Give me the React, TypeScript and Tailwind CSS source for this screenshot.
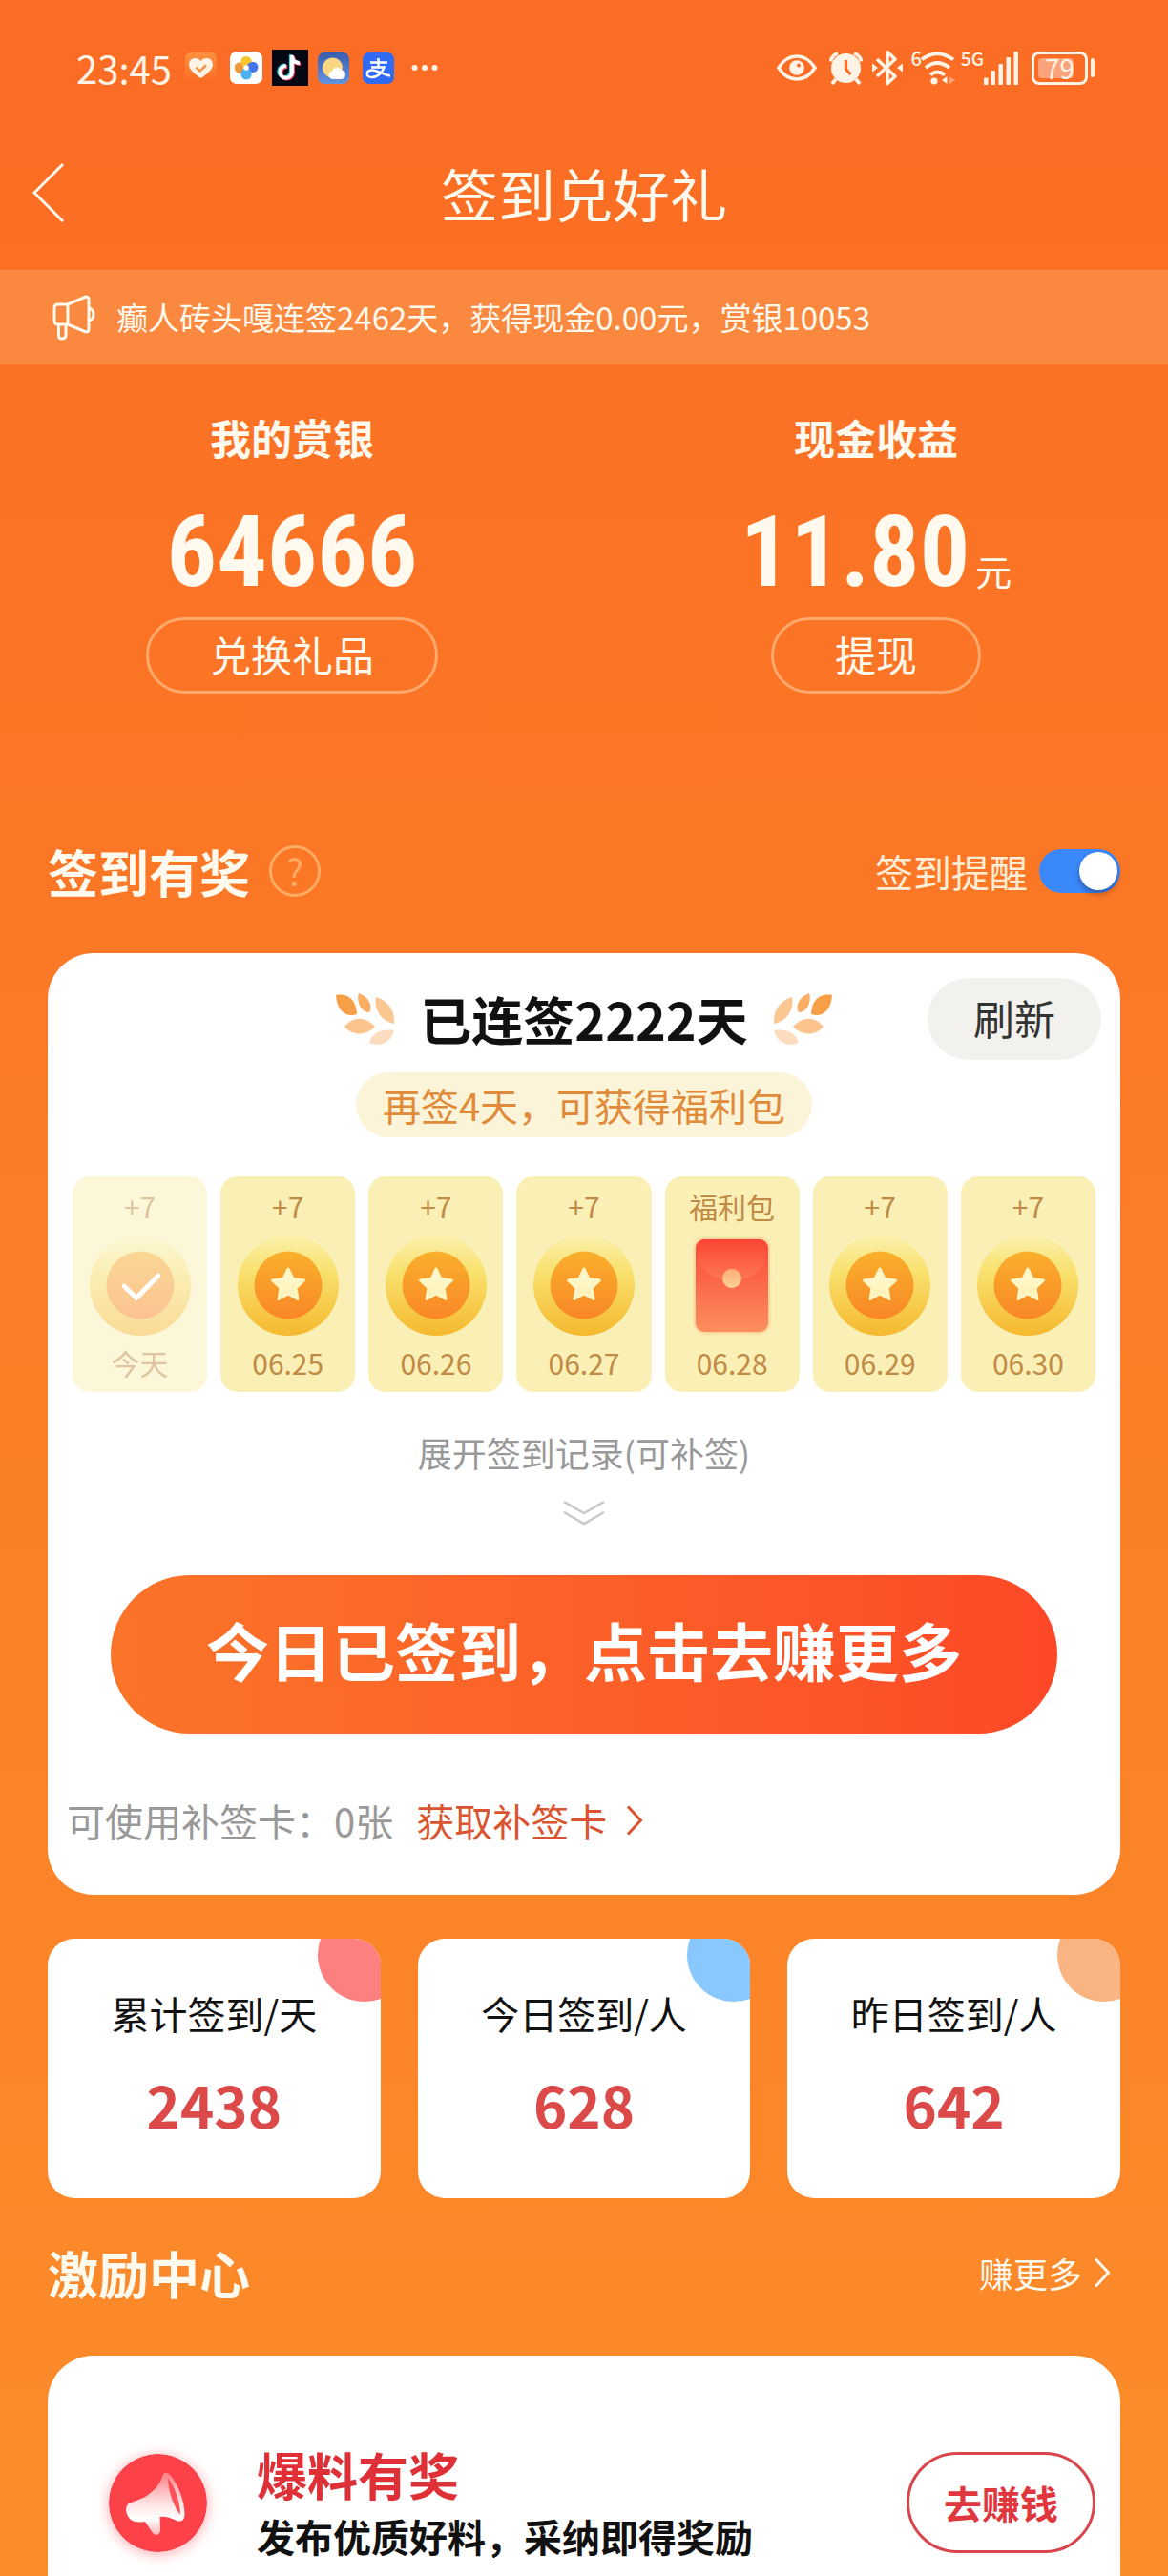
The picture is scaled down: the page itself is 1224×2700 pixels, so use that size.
import { useState } from "react";

type Day = { reward: string; date: string; kind: "done" | "coin" | "gift" };

const days: Day[] = [
  { reward: "+7", date: "今天", kind: "done" },
  { reward: "+7", date: "06.25", kind: "coin" },
  { reward: "+7", date: "06.26", kind: "coin" },
  { reward: "+7", date: "06.27", kind: "coin" },
  { reward: "福利包", date: "06.28", kind: "gift" },
  { reward: "+7", date: "06.29", kind: "coin" },
  { reward: "+7", date: "06.30", kind: "coin" },
];

const stats = [
  { label: "累计签到/天", value: "2438", dot: "bg-[#fd8080]" },
  { label: "今日签到/人", value: "628", dot: "bg-[#88c8ff]" },
  { label: "昨日签到/人", value: "642", dot: "bg-[#fab482]" },
];

function HeartApp() {
  return (
    <svg className="size-[33px]" viewBox="0 0 33 33" aria-hidden="true">
      <defs>
        <linearGradient id="heartBg" x1="0" y1="0" x2="0" y2="1">
          <stop offset="0" stopColor="#fd9140" />
          <stop offset="1" stopColor="#fb6a22" />
        </linearGradient>
      </defs>
      <rect width="33" height="33" rx="6" fill="url(#heartBg)" />
      <path d="M16.5 27C9 22 4 17.500 4 12.500 4 8.500 7 6 10.500 6c2.500 0 4.700 1.200 6 3.200C17.800 7.200 20 6 22.500 6 26 6 29 8.500 29 12.500 29 17.500 24 22 16.500 27Z" fill="#fff3e6" />
      <path d="m11.500 15.500 4 4 6.500-6" fill="none" stroke="#f0954a" strokeWidth="2.600" />
    </svg>
  );
}

function GalleryApp() {
  return (
    <svg className="size-[34px]" viewBox="0 0 34 34" aria-hidden="true">
      <rect width="34" height="34" rx="7" fill="#fff" />
      <path d="M17 17c-2 6-7 8-11 4C3 16 6 10.500 11 11.500c3 .5 5 2.500 6 5.500Z" fill="#f2993c" />
      <path d="M17 17C12 16 9.500 9.500 13.500 6c5-3 10.500 1 9 6.500-1 2.500-3 4-5.500 4.500Z" fill="#f7c52c" />
      <path d="M17 17c1-5 7-8 11-4.500 3.500 4.500 0 10-5 9.500-3-.5-5-2-6-5Z" fill="#4276e8" />
      <path d="M17 17c5 1 7.500 7 4 11-4.500 3.500-10.500 0-9.500-5.500.5-3 2.500-5 5.500-5.500Z" fill="#4db1f2" />
      <circle cx="17" cy="17" r="2.800" fill="#fff" />
    </svg>
  );
}

function NoteApp() {
  const note = "M21 6v17.500a6.300 6.300 0 1 1-6-6.300M21 7c.5 4.500 3.500 7 8 7.300";
  return (
    <svg className="size-[38px]" viewBox="0 0 38 38" aria-hidden="true">
      <rect width="38" height="38" fill="#060714" />
      <g fill="none" strokeWidth="3.800">
        <path d={note} stroke="#3fd6dc" transform="translate(-1.200 -.8)" />
        <path d={note} stroke="#f23d68" transform="translate(1.200 .8)" />
        <path d={note} stroke="#fff" />
      </g>
    </svg>
  );
}

function WeatherApp() {
  return (
    <svg className="size-[33px]" viewBox="0 0 33 33" aria-hidden="true">
      <defs>
        <linearGradient id="sky" x1="0" y1="0" x2="0" y2="1">
          <stop offset="0" stopColor="#3b5cae" />
          <stop offset="1" stopColor="#6394df" />
        </linearGradient>
      </defs>
      <rect width="33" height="33" rx="7" fill="url(#sky)" />
      <circle cx="15.500" cy="16" r="10.500" fill="#f9d681" />
      <path d="M15.500 28a4.200 4.200 0 0 1-.5-8.300 5.500 5.500 0 0 1 10-1.200 4.800 4.800 0 0 1-.5 9.500Z" fill="#fff" />
    </svg>
  );
}

function PayApp() {
  return (
    <svg className="size-[33px]" viewBox="0 0 33 33" aria-hidden="true">
      <rect width="33" height="33" rx="7" fill="#316bf3" />
      <g fill="none" stroke="#fff" strokeWidth="2.400">
        <path d="M8 10.500h18M16.500 6v9M9 15.500h13.500C20 22 15 26 9.500 26 3 26 3 18.500 10 18.500c6 0 11 5 19 6" />
      </g>
    </svg>
  );
}

function StatusBar() {
  return (
    <div className="flex items-center justify-between pt-[51px] pr-[77px] pb-[34px] pl-20 text-[#fff3e6]">
      <div className="flex h-10 items-center gap-3.5">
        <time className="text-[40px] leading-10">23:45</time>
        <HeartApp />
        <GalleryApp />
        <div className="-mx-1">
          <NoteApp />
        </div>
        <WeatherApp />
        <PayApp />
        <svg className="ml-1 h-2 w-7" viewBox="0 0 28 8" fill="currentColor" aria-hidden="true">
          <circle cx="3.500" cy="4" r="3" />
          <circle cx="14" cy="4" r="3" />
          <circle cx="24.500" cy="4" r="3" />
        </svg>
      </div>
      <div className="flex h-10 items-center">
        <svg className="h-[28px] w-[42px]" viewBox="0 0 42 28" aria-hidden="true">
          <path d="M2 14C7 6 14 2 21 2s14 4 19 12c-5 8-12 12-19 12S7 22 2 14Z" fill="none" stroke="currentColor" strokeWidth="3.600" />
          <circle cx="21" cy="14" r="7.800" fill="currentColor" />
          <circle cx="23" cy="11.500" r="2" fill="#fb6c24" />
        </svg>
        <svg className="ml-[13px] size-[35px]" viewBox="0 0 35 35" aria-hidden="true">
          <circle cx="17.500" cy="17.500" r="15.500" fill="currentColor" />
          <path d="M1.500 10.500A11 11 0 0 1 9 2M33.500 10.500A11 11 0 0 0 26 2M7 29l-4 5M28 29l4 5" stroke="currentColor" strokeWidth="3.800" fill="none" />
          <path d="M17.500 9v9.500l5 5.500" fill="none" stroke="#fb6c24" strokeWidth="3.200" />
        </svg>
        <svg className="ml-2.5 h-[38px] w-[32px]" viewBox="0 0 32 38" aria-hidden="true">
          <path d="m5 10 19 18-8 7.500v-33L24 10 5 28" fill="none" stroke="currentColor" strokeWidth="3.600" strokeLinejoin="round" />
          <path d="m0 14.500 6 4.500-6 4.500ZM32 14.500 26 19l6 4.500Z" fill="currentColor" />
        </svg>
        <span className="ml-2 self-start text-xl leading-5 font-medium">6</span>
        <svg className="-ml-px h-9 w-[38px]" viewBox="0 0 38 36" aria-hidden="true">
          <g fill="none" stroke="currentColor" strokeWidth="4">
            <path d="M1 9.500Q17 -3 34 9.500" />
            <path d="M5 18q12-10 25 0" />
            <path d="M10 25.500q7-6 15 0" />
          </g>
          <circle cx="14" cy="32" r="3.600" fill="currentColor" />
          <path d="M27.500 27v8l-5.500-4Z" fill="currentColor" />
          <path d="M30 27.500 36 31l-6 4.500Z" fill="#fda273" />
        </svg>
        <span className="ml-1 self-start text-[19px] leading-5 font-medium">5G</span>
        <svg className="h-[35px] w-9" viewBox="0 0 36 35" fill="currentColor" aria-hidden="true">
          <rect x="0" y="27.500" width="4.500" height="7.500" rx="1" />
          <rect x="7.500" y="20" width="4.500" height="15" rx="1" />
          <rect x="15.500" y="13" width="4.500" height="22" rx="1" />
          <rect x="23.500" y="6" width="4.500" height="29" rx="1" />
          <rect x="31.500" y="0" width="4.500" height="35" rx="1" />
        </svg>
        <div className="relative ml-3.5 flex h-[35px] w-[59px] items-center justify-center rounded-lg border-3 border-current">
          <span className="absolute inset-y-1 left-1 w-[37px] rounded-sm bg-[#fda37b]" />
          <span className="relative text-[28px] leading-7">79</span>
        </div>
        <span className="ml-[3px] h-5 w-1 rounded-sm bg-current" />
      </div>
    </div>
  );
}

function Chevron() {
  return (
    <svg className="h-8 w-[18px]" viewBox="0 0 18 32" fill="none" stroke="currentColor" strokeWidth="3" aria-hidden="true">
      <path d="m2 1.500 13.500 14.500L2 30.500" />
    </svg>
  );
}

function Coin({ kind }: { kind: "done" | "coin" }) {
  return (
    <svg className="size-[106px]" viewBox="0 0 106 106" aria-hidden="true">
      <defs>
        <linearGradient id="rim" x1="0" y1="0" x2="0" y2="1">
          <stop offset="0" stopColor="#faf0ae" />
          <stop offset=".35" stopColor="#f9e270" />
          <stop offset="1" stopColor="#f5b82e" />
        </linearGradient>
        <linearGradient id="face" x1="0" y1="0" x2="0" y2="1">
          <stop offset="0" stopColor="#f9b02c" />
          <stop offset="1" stopColor="#f98726" />
        </linearGradient>
        <linearGradient id="star" x1="0" y1="0" x2="0" y2="1">
          <stop offset="0" stopColor="#fffbd5" />
          <stop offset="1" stopColor="#fdf0b4" />
        </linearGradient>
      </defs>
      <circle cx="53" cy="53" r="53" fill="url(#rim)" />
      <circle cx="53" cy="53" r="35.500" fill="url(#face)" />
      {kind === "coin" ? (
        <path
          d="m53 36 5 10.500 11.500 1.500-8.500 8 2 11.500L53 62l-10 5.500 2-11.500-8.500-8L48 46.500Z"
          fill="url(#star)"
          stroke="#fdf5c3"
          strokeWidth="3"
          strokeLinejoin="round"
        />
      ) : (
        <path d="m36 54 13 12.500L72 43" fill="none" stroke="#fff" strokeWidth="5" strokeLinecap="round" strokeLinejoin="round" />
      )}
    </svg>
  );
}

function Envelope() {
  return (
    <svg className="h-[106px] w-[90px]" viewBox="-7 -5 90 106" aria-hidden="true">
      <defs>
        <linearGradient id="packet" x1="0" y1="0" x2="0" y2="1">
          <stop offset="0" stopColor="#fd4637" />
          <stop offset="1" stopColor="#fb8f5e" />
        </linearGradient>
        <linearGradient id="flap" x1="0" y1="0" x2="0" y2="1">
          <stop offset="0" stopColor="#fb4433" />
          <stop offset="1" stopColor="#fd7a55" />
        </linearGradient>
        <linearGradient id="seal" x1="0" y1="0" x2="0" y2="1">
          <stop offset="0" stopColor="#fdae78" />
          <stop offset="1" stopColor="#fdd296" />
        </linearGradient>
        <filter id="glow" x="-20%" y="-20%" width="140%" height="140%">
          <feGaussianBlur stdDeviation="2.500" />
        </filter>
      </defs>
      <rect width="76" height="97" rx="9" fill="#fb8a5c" opacity=".7" filter="url(#glow)" />
      <rect width="76" height="97" rx="9" fill="url(#packet)" />
      <path d="M9 0h58q9 0 5 24C66 37 52 43 38 43S10 37 4 24Q0 0 9 0Z" fill="url(#flap)" />
      <circle cx="38" cy="41" r="10" fill="url(#seal)" />
    </svg>
  );
}

function Laurel({ flip = false }: { flip?: boolean }) {
  return (
    <svg className={flip ? "h-[54px] w-[62px] -scale-x-100" : "h-[54px] w-[62px]"} viewBox="0 0 62 54" aria-hidden="true">
      <path d="M0 2C10 0 21 4 22 22 10 26 1 18 0 2Z" fill="#f7a048" />
      <path d="M24 0C35 4 39 14 35 20 27 20 21 10 24 0Z" fill="#f9ae64" />
      <path d="M42 4C55 8 62 18 61 32 49 30 39 18 42 4Z" fill="#fac692" />
      <path d="M9 35C18 24 31 24 41 35 31 45 18 45 9 35Z" fill="#fac48c" />
      <path d="M35 52C38 41 49 37 61 39 58 52 46 57 35 52Z" fill="#fcdcbe" />
    </svg>
  );
}

function DayCard({ day }: { day: Day }) {
  return (
    <li
      className={
        day.kind === "done"
          ? "flex flex-col items-center rounded-[18px] bg-[#fbf0b4] py-[11px] opacity-50"
          : "flex flex-col items-center rounded-[18px] bg-[#faf0b6] py-[11px]"
      }
    >
      <span className="text-[30px] leading-10 text-[#c18a45]">{day.reward}</span>
      <span className="mt-2.5 mb-2">{day.kind === "gift" ? <Envelope /> : <Coin kind={day.kind} />}</span>
      <span className="text-[30px] leading-10 text-[#c18a45]">{day.date}</span>
    </li>
  );
}

export default function App() {
  const [remind, setRemind] = useState(true);

  return (
    <div
      lang="zh-CN"
      className="flex min-h-screen flex-col bg-linear-to-b from-[#fb6c24] to-[#fb8c2a] font-['Noto_Sans_CJK_SC',sans-serif] text-[#fff9ee]"
    >
      <StatusBar />

      <header className="grid h-[158px] grid-cols-[1fr_auto_1fr] items-center px-[34px] pb-1">
        <button type="button" aria-label="返回" className="justify-self-start">
          <svg className="h-[62px] w-[34px]" viewBox="0 0 34 62" fill="none" stroke="currentColor" strokeWidth="3" aria-hidden="true">
            <path d="M32 1 2 31l30 30" />
          </svg>
        </button>
        <h1 className="text-[60px] leading-[60px]">签到兑好礼</h1>
      </header>

      <div className="flex h-[99px] items-center gap-[22px] bg-[#fb883f] px-[54px]">
        <svg
          className="h-12 w-[46px] shrink-0"
          viewBox="0 0 46 48"
          fill="none"
          stroke="currentColor"
          strokeWidth="3"
          strokeLinejoin="round"
          aria-hidden="true"
        >
          <path d="M17 10H7q-4 0-4 4v13q0 4 4 4h10l19 8q3 0 3-3V5q0-3-3-3L17 10Zm0 0v21M7.500 31v12q0 3 3.500 3t4-3V31M39 14q5 1 5 6.500T39 27" />
        </svg>
        <p className="pb-0.5 text-[33px] leading-10 whitespace-nowrap">癫人砖头嘎连签2462天，获得现金0.00元，赏银10053</p>
      </div>

      <section className="grid grid-cols-2 pt-[46px]">
        <div className="flex flex-col items-center">
          <h2 className="text-[43px] leading-[60px] font-bold">我的赏银</h2>
          <p className="mt-9 font-['Liberation_Sans_Narrow','Roboto_Condensed',Roboto] text-[104px] leading-[110px] font-bold">64666</p>
          <button type="button" className="mt-[13px] h-20 rounded-full border-3 border-[#ffaa6c] px-16 pb-1 text-[43px] leading-[60px]">
            兑换礼品
          </button>
        </div>
        <div className="flex flex-col items-center">
          <h2 className="text-[43px] leading-[60px] font-bold">现金收益</h2>
          <p className="mt-9 flex items-baseline gap-1.5">
            <span className="font-['Liberation_Sans_Narrow','Roboto_Condensed',Roboto] text-[104px] leading-[110px] font-bold">11.80</span>
            <span className="text-[38px] leading-10">元</span>
          </p>
          <button type="button" className="mt-[13px] h-20 rounded-full border-3 border-[#ffaa6c] px-16 pb-1 text-[43px] leading-[60px]">
            提现
          </button>
        </div>
      </section>

      <main className="flex grow flex-col px-[50px]">
        <div className="mt-[156px] flex h-[60px] items-center justify-between">
          <div className="flex items-center gap-5">
            <h2 className="text-[53px] leading-[60px] font-bold">签到有奖</h2>
            <button
              type="button"
              aria-label="签到规则"
              className="flex size-[54px] items-center justify-center rounded-full border-3 border-[#ffac63] text-[38px] leading-10 text-[#ffac63]"
            >
              ?
            </button>
          </div>
          <label className="flex items-center gap-3 text-[40px] leading-[60px] text-[#ffedd6]">
            签到提醒
            <input
              type="checkbox"
              role="switch"
              checked={remind}
              onChange={(e) => setRemind(e.target.checked)}
              className="h-[46px] w-[85px] appearance-none rounded-full bg-[#b9a090] p-[3px] before:block before:size-10 before:rounded-full before:bg-white before:shadow-[0_4px_6px_rgba(0,0,0,0.3)] checked:bg-[#3b88fb] checked:before:ml-[39px]"
            />
          </label>
        </div>

        <section className="mt-14 rounded-[48px] bg-white pt-[26px] pb-12">
          <div className="grid h-[86px] grid-cols-[1fr_auto_1fr] items-center px-5">
            <div className="col-start-2 flex items-center gap-[26px]">
              <Laurel />
              <h3 className="text-[54px] leading-[60px] font-bold text-[#111]">已连签2222天</h3>
              <Laurel flip />
            </div>
            <button type="button" className="h-[86px] w-[182px] justify-self-end rounded-full bg-[#f2f1ed] pb-1 text-[43px] leading-[60px] text-[#333]">
              刷新
            </button>
          </div>

          <p className="mx-auto mt-[13px] w-fit rounded-full bg-[#fcf4d8] px-7 py-1 text-[40px] leading-[60px] text-[#e08a3a]">
            再签4天，可获得福利包
          </p>

          <ul className="mt-[41px] grid grid-cols-7 gap-3.5 px-[26px]">
            {days.map((d) => (
              <DayCard key={d.date} day={d} />
            ))}
          </ul>

          <button type="button" className="mx-auto mt-9 flex flex-col items-center text-[36px] leading-[54px] text-[#999]">
            展开签到记录(可补签)
            <svg className="mt-6 h-[26px] w-[44px]" viewBox="0 0 44 26" fill="none" stroke="#c9c9c9" strokeWidth="2.500" aria-hidden="true">
              <path d="m1 1 21 12L43 1M1 12l21 12 21-12" />
            </svg>
          </button>

          <div className="px-[66px]">
            <button
              type="button"
              className="mt-[52px] h-[166px] w-full rounded-full bg-linear-to-r from-[#fa7429] to-[#fd4827] pb-3 text-[66px] leading-[80px] font-bold text-white"
            >
              今日已签到，点击去赚更多
            </button>
          </div>

          <div className="mt-[61px] flex h-[60px] items-center gap-6 px-5 text-[40px] leading-[60px] text-[#999]">
            <span>可使用补签卡：0张</span>
            <a href="#cards" className="flex items-center gap-5 text-[#d9542f]">
              获取补签卡
              <Chevron />
            </a>
          </div>
        </section>

        <section className="mt-[46px] grid grid-cols-3 gap-[39px]">
          {stats.map((s) => (
            <div key={s.label} className="relative flex flex-col items-center overflow-hidden rounded-[28px] bg-white pt-12 pb-16">
              <span className={`absolute -top-8 -right-8 size-[98px] rounded-full ${s.dot}`} />
              <span className="text-[40px] leading-[60px] text-[#111]">{s.label}</span>
              <span className="mt-[30px] text-[60px] leading-[70px] font-bold text-[#db4a48]">{s.value}</span>
            </div>
          ))}
        </section>

        <div className="mt-12 flex h-[60px] items-center justify-between pr-2.5">
          <h2 className="text-[53px] leading-[60px] font-bold">激励中心</h2>
          <a href="#more" className="flex items-center gap-3 text-[36px] leading-[60px]">
            赚更多
            <Chevron />
          </a>
        </div>

        <section className="mt-[57px] grow rounded-t-[48px] bg-white pt-[89px]">
          <div className="flex items-center pr-[26px] pl-16">
            <svg className="size-[103px] shrink-0 rounded-full shadow-[0_2px_14px_rgba(253,65,75,0.45)]" viewBox="0 0 103 103" aria-hidden="true">
              <defs>
                <linearGradient id="horn" x1="0" y1="0" x2="0" y2="1">
                  <stop offset="0" stopColor="#fd7f86" />
                  <stop offset=".5" stopColor="#ffe3e4" />
                  <stop offset=".75" stopColor="#fff" />
                  <stop offset="1" stopColor="#fdb3b6" />
                </linearGradient>
              </defs>
              <circle cx="51.500" cy="51.500" r="51.500" fill="#fd4149" />
              <path
                d="M56 24C57 19 61 18 65 23 73 33 79 48 79.500 62 79.500 69 77 72 71 70 65 67 59 65 53.500 66L54 80C54 85 49 86.500 46 83L38 71C32 72 26 72 22 68 17 62 17 55 21 52 27 49 36 47 41 43 49 37 54 31 56 24Z"
                fill="url(#horn)"
              />
              <path d="M62 25C69 35 75 50 75 64 68 55 62 39 62 25Z" fill="#fd5058" />
            </svg>
            <div className="ml-[52px] grow">
              <h3 className="text-[53px] leading-[70px] font-bold text-[#df3038]">爆料有奖</h3>
              <p className="text-[40px] leading-[60px] font-bold text-[#111]">发布优质好料，采纳即得奖励</p>
            </div>
            <button type="button" className="h-[106px] w-[198px] shrink-0 rounded-full border-3 border-[#d9454c] text-[40px] leading-[60px] font-bold text-[#e0373e]">
              去赚钱
            </button>
          </div>
        </section>
      </main>
    </div>
  );
}
